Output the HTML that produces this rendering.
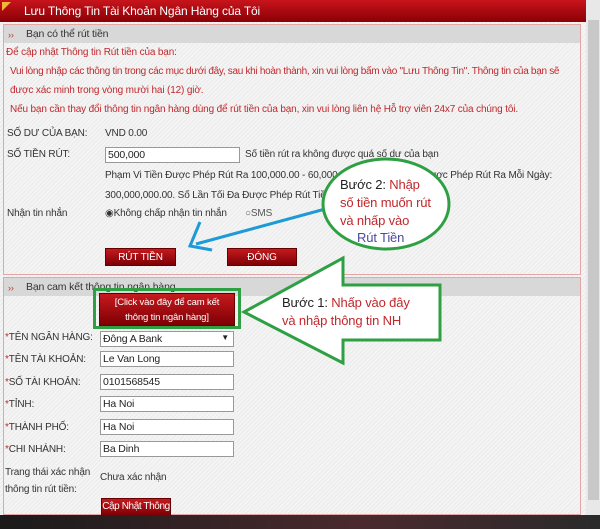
<!DOCTYPE html><html><head><meta charset="utf-8"><style>
*{margin:0;padding:0;box-sizing:border-box}
body{width:600px;height:529px;overflow:hidden;position:relative;font-family:"Liberation Sans",sans-serif;font-size:10px;letter-spacing:-0.15px;color:#333;background:#f2f2f2}
.a{position:absolute;white-space:nowrap}
.hdr{left:0;top:0;width:586px;height:22px;background:linear-gradient(#c8141c,#8a0006);color:#fff;font-size:12px;padding:4px 0 0 24px}
.bg{left:0;top:22px;width:586px;height:493px;background:repeating-linear-gradient(135deg,#f4f4f4 0 2px,#ebebeb 2px 3px)}
.box{border:1px solid #e3a6a6}
.sh{background:#d8d8d8;height:18px;font-size:10.5px;padding:3px 0 0 22px;color:#333}
.red{color:#c0282c}
.in{position:absolute;background:#fff;border:1px solid #999;height:16px;font-size:10.5px;padding:1px 2px;color:#222;white-space:nowrap}
.btn{position:absolute;background:linear-gradient(#c51a1e,#7e0004);color:#fff;text-align:center;font-size:10px;border:1px solid #600;padding-top:3px;white-space:nowrap}
.sb{left:586px;top:0;width:14px;height:515px;background:#e8e8e8}
</style></head><body>
<div class="a hdr">Lưu Thông Tin Tài Khoản Ngân Hàng của Tôi</div>
<div class="a" style="left:2px;top:2px;width:0;height:0;border-left:9px solid #f3b53a;border-bottom:9px solid transparent"></div>
<div class="a bg"></div>
<div class="a sb"><div style="position:absolute;left:2px;top:20px;width:11px;height:480px;background:#c8c8c8"></div></div>
<div class="a box" style="left:3px;top:24px;width:578px;height:251px"><div class="sh">Bạn có thể rút tiền</div></div>
<div class="a" style="left:8px;top:30px;color:#b33;font-size:9px">››</div>
<div class="a red" style="left:6px;top:47px">Để cập nhật Thông tin Rút tiền của bạn:</div>
<div class="a red" style="left:10px;top:66px;letter-spacing:-0.3px">Vui lòng nhập các thông tin trong các mục dưới đây, sau khi hoàn thành, xin vui lòng bấm vào "Lưu Thông Tin". Thông tin của bạn sẽ</div>
<div class="a red" style="left:10px;top:85px">được xác minh trong vòng mười hai (12) giờ.</div>
<div class="a red" style="left:10px;top:104px">Nếu bạn cần thay đổi thông tin ngân hàng dùng để rút tiền của bạn, xin vui lòng liên hệ Hỗ trợ viên 24x7 của chúng tôi.</div>
<div class="a" style="left:7px;top:128px">SỐ DƯ CỦA BẠN:</div>
<div class="a" style="left:105px;top:128px">VND 0.00</div>
<div class="a" style="left:7px;top:149px">SỐ TIỀN RÚT:</div>
<div class="in" style="left:105px;top:147px;width:135px">500,000</div>
<div class="a" style="left:245px;top:149px">Số tiền rút ra không được quá số dư của bạn</div>
<div class="a" style="left:105px;top:170px">Phạm Vi Tiền Được Phép Rút Ra 100,000.00 - 60,000.00. Số Tiền Tối Đa Được Phép Rút Ra Mỗi Ngày:</div>
<div class="a" style="left:105px;top:190px">300,000,000.00. Số Lần Tối Đa Được Phép Rút Tiền</div>
<div class="a" style="left:7px;top:208px">Nhận tin nhắn</div>
<div class="a" style="left:105px;top:208px">◉Không chấp nhận tin nhắn</div>
<div class="a" style="left:245px;top:208px;color:#555">○SMS</div>
<div class="btn" style="left:105px;top:248px;width:71px;height:18px">RÚT TIỀN</div>
<div class="btn" style="left:227px;top:248px;width:70px;height:18px">ĐÓNG</div>
<div class="a box" style="left:3px;top:277px;width:578px;height:238px"><div class="sh">Bạn cam kết thông tin ngân hàng</div></div>
<div class="a" style="left:8px;top:283px;color:#b33;font-size:9px">››</div>
<div class="a" style="left:93px;top:288px;width:148px;height:41px;border:3px solid #2ea043"></div>
<div class="btn" style="left:99px;top:293px;width:136px;height:33px;font-size:9.5px;line-height:15px;padding-top:1px">[Click vào đây để cam kết<br>thông tin ngân hàng]</div>
<div class="a" style="left:5px;top:332px"><span class="red">*</span>TÊN NGÂN HÀNG:</div>
<div class="in" style="left:100px;top:331px;width:134px">Đông A Bank<span style="position:absolute;right:4px;font-size:8px">▼</span></div>
<div class="a" style="left:5px;top:354px"><span class="red">*</span>TÊN TÀI KHOẢN:</div>
<div class="in" style="left:100px;top:351px;width:134px">Le Van Long</div>
<div class="a" style="left:5px;top:377px"><span class="red">*</span>SỐ TÀI KHOẢN:</div>
<div class="in" style="left:100px;top:374px;width:134px">0101568545</div>
<div class="a" style="left:5px;top:399px"><span class="red">*</span>TỈNH:</div>
<div class="in" style="left:100px;top:396px;width:134px">Ha Noi</div>
<div class="a" style="left:5px;top:422px"><span class="red">*</span>THÀNH PHỐ:</div>
<div class="in" style="left:100px;top:419px;width:134px">Ha Noi</div>
<div class="a" style="left:5px;top:444px"><span class="red">*</span>CHI NHÁNH:</div>
<div class="in" style="left:100px;top:441px;width:134px">Ba Dinh</div>
<div class="a" style="left:5px;top:464px;line-height:17px">Trang thái xác nhận<br>thông tin rút tiền:</div>
<div class="a" style="left:100px;top:472px">Chưa xác nhận</div>
<div class="btn" style="left:101px;top:498px;width:70px;height:18px;padding-top:2px;letter-spacing:-0.4px">Cập Nhật Thông</div>
<div class="a" style="left:0;top:515px;width:600px;height:14px;background:linear-gradient(90deg,#1a1a1a,#4a2a2e 60%,#2a2a2a)"></div>
<svg class="a" style="left:0;top:0" width="600" height="529">
<line x1="340" y1="205" x2="196" y2="244" stroke="#1e9ad6" stroke-width="3"/>
<polyline points="200,222 190,246 212,250" fill="none" stroke="#1e9ad6" stroke-width="3"/>
<ellipse cx="386" cy="204" rx="63" ry="45" fill="#fff" stroke="#2ea043" stroke-width="3"/>
<polygon points="244,312 343,258 343,285 440,285 440,340 343,340 343,363" fill="#fff" stroke="#2ea043" stroke-width="3"/>
<g font-family="Liberation Sans,sans-serif" font-size="13">
<text x="340" y="189" fill="#222">Bước 2: <tspan fill="#c0282c">Nhập</tspan></text>
<text x="340" y="207" fill="#c0282c">số tiền muốn rút</text>
<text x="340" y="225" fill="#c0282c">và nhấp vào</text>
<text x="357" y="242" fill="#4a4aa0">Rút Tiền</text>
<text x="282" y="307" fill="#222">Bước 1: <tspan fill="#c0282c">Nhấp vào đây</tspan></text>
<text x="282" y="325" fill="#c0282c">và nhập thông tin NH</text>
</g></svg>
</body></html>
